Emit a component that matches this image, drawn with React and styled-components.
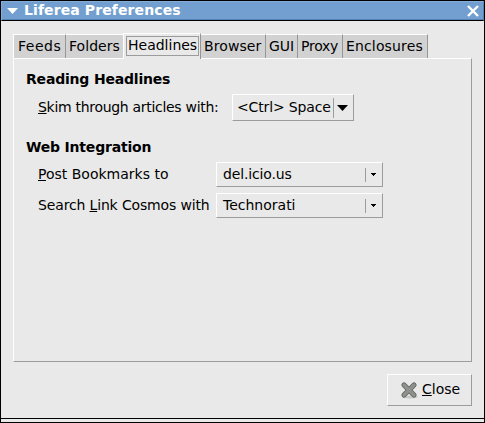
import React from 'react';
import styled, { createGlobalStyle } from 'styled-components';

const GlobalStyle = createGlobalStyle`
  * { box-sizing: border-box; }
  body { margin: 0; background: #e9e9e9; }
`;

const Window = styled.div`
  width: 485px;
  height: 423px;
  display: flex;
  flex-direction: column;
  border: 1px solid #000;
  background: #e9e9e9;
  color: #000;
  font: 14px/18px 'DejaVu Sans', sans-serif;
  white-space: nowrap;
  overflow: hidden;
  cursor: default;
`;

const TitleBar = styled.header`
  height: 20px;
  flex: none;
  display: flex;
  align-items: center;
  padding: 0 4px 0 5px;
  background: #729fcf;
  border-top: 1px solid #85add8;
  border-left: 1px solid #85add8;
  border-right: 1px solid #5582b3;
  border-bottom: 1px solid #000;
  box-shadow: inset 0 -1px #5582b3;
  color: #fff;
`;

const Title = styled.h1`
  flex: 1;
  margin: 0 0 0 6px;
  padding-bottom: 2px;
  font-size: 14px;
  line-height: 18px;
  font-weight: bold;
  letter-spacing: 0.1px;
`;

const Content = styled.main`
  height: 397px;
  flex: none;
  padding: 12px 12px 0;
  display: flex;
  flex-direction: column;
`;

const TabStrip = styled.nav`
  display: flex;
  align-items: flex-end;
  height: 25px;
  position: relative;
  z-index: 1;
`;

const Tab = styled.div`
  width: ${(p) => p.$width}px;
  height: ${(p) => (p.$active ? 26 : 24)}px;
  margin-bottom: ${(p) => (p.$active ? -1 : 0)}px;
  padding: 2px 0 0 ${(p) => p.$pad ?? 3}px;
  background: ${(p) => (p.$active ? '#e9e9e9' : '#d2d2d2')};
  border-top: 1px solid #fff;
  border-left: ${(p) => (p.$edge ? '1px solid #fff' : '0')};
  border-right: ${(p) => (p.$last ? '0' : '1px solid #969696')};
  letter-spacing: ${(p) => p.$spacing || 0}px;
`;

const FocusFrame = styled.span`
  display: block;
  width: 73px;
  height: 20px;
  padding-left: 1px;
  border: 1px solid #9c9c9c;
  line-height: 17px;
`;

const Panel = styled.section`
  height: 304px;
  padding: 11px 0 0 12px;
  border: 1px solid #fff;
  border-right-color: #9c9c9c;
  border-bottom-color: #9c9c9c;
`;

const Heading = styled.h2`
  margin: ${(p) => p.$top || 0}px 0 0;
  font-size: 14px;
  line-height: 18px;
  font-weight: bold;
  letter-spacing: -0.19px;
`;

const Field = styled.div`
  display: flex;
  align-items: center;
  height: ${(p) => p.$height}px;
  margin: ${(p) => p.$top}px 0 0 12px;
`;

const Label = styled.label`
  width: ${(p) => p.$width}px;
  flex: none;
  padding-bottom: 1px;
  letter-spacing: ${(p) => p.$spacing || 0}px;
`;

const Mnemonic = styled.span`
  text-decoration: underline;
  text-decoration-thickness: 1px;
  text-underline-offset: 1px;
  text-decoration-skip-ink: none;
`;

const Raised = styled.button`
  display: flex;
  align-items: center;
  width: ${(p) => p.$width}px;
  height: ${(p) => p.$height}px;
  padding: 0;
  border: 1px solid #fff;
  border-right-color: #9c9c9c;
  border-bottom-color: #9c9c9c;
  border-radius: 0;
  background: #e9e9e9;
  color: #000;
  font: inherit;
`;

const Value = styled.span`
  width: ${(p) => p.$width}px;
  padding: 0 0 1px ${(p) => p.$pad}px;
  text-align: left;
  letter-spacing: ${(p) => p.$spacing || 0}px;
`;

const Divider = styled.i`
  width: 1px;
  height: ${(p) => p.$height}px;
  background: #9c9c9c;
`;

const Arrow = styled.svg`
  display: block;
  flex: none;
  margin-left: ${(p) => p.$left || 0}px;
`;

const Actions = styled.footer`
  display: flex;
  justify-content: flex-end;
  margin-top: 12px;
`;

const CloseLabel = styled.span`
  margin-left: 4px;
  padding-bottom: 2px;
`;

const ResizeBar = styled.div`
  height: 4px;
  flex: none;
  border-top: 1px solid #000;
`;

const TABS = [
  { name: 'Feeds', width: 53, edge: true, spacing: 0.5, pad: 4 },
  { name: 'Folders', width: 57, last: true, spacing: 0.05 },
  { name: 'Headlines', width: 78, active: true, edge: true, pad: 2 },
  { name: 'Browser', width: 65, spacing: 0.1 },
  { name: 'GUI', width: 32 },
  { name: 'Proxy', width: 45, spacing: -0.25 },
  { name: 'Enclosures', width: 85, spacing: 0.15 },
];

function SmallArrow() {
  return (
    <Arrow $left={5} width="5" height="3" shapeRendering="crispEdges">
      <path d="M0 0h5v1h-1v1h-1v1h-1v-1h-1v-1h-1z" />
    </Arrow>
  );
}

export default function App() {
  return (
    <>
      <GlobalStyle />
      <Window>
        <TitleBar>
          <svg width="11" height="6" fill="#fff"><path d="M0 0h11L5.5 6z" /></svg>
          <Title>Liferea Preferences</Title>
          <svg width="12" height="12" stroke="#fff" strokeWidth="2.4"><path d="M1 1l10 10M11 1L1 11" /></svg>
        </TitleBar>
        <Content>
          <TabStrip>
            {TABS.map((t) => (
              <Tab key={t.name} $width={t.width} $active={t.active} $edge={t.edge} $last={t.last} $spacing={t.spacing} $pad={t.pad}>
                {t.active ? <FocusFrame>{t.name}</FocusFrame> : t.name}
              </Tab>
            ))}
          </TabStrip>
          <Panel>
            <Heading>Reading Headlines</Heading>
            <Field $height={27} $top={6}>
              <Label $width={194} $spacing={-0.3}><Mnemonic>S</Mnemonic>kim through articles with:</Label>
              <Raised $width={122} $height={27}>
                <Value $width={100} $pad={4} $spacing={-0.15}>&lt;Ctrl&gt; Space</Value>
                <Divider $height={20} />
                <Arrow $left={3} width="11" height="6"><path d="M0 0h11L5.5 6z" /></Arrow>
              </Raised>
            </Field>
            <Heading $top={17}>Web Integration</Heading>
            <Field $height={25} $top={6}>
              <Label $width={178}><Mnemonic>P</Mnemonic>ost Bookmarks to</Label>
              <Raised $width={167} $height={25}>
                <Value $width={148} $pad={6} $spacing={-0.15}>del.icio.us</Value>
                <Divider $height={14} />
                <SmallArrow />
              </Raised>
            </Field>
            <Field $height={25} $top={6}>
              <Label $width={178} $spacing={-0.15}>Search <Mnemonic>L</Mnemonic>ink Cosmos with</Label>
              <Raised $width={167} $height={25}>
                <Value $width={148} $pad={6}>Technorati</Value>
                <Divider $height={14} />
                <SmallArrow />
              </Raised>
            </Field>
          </Panel>
          <Actions>
            <Raised $width={85} $height={32}>
              <Arrow $left={12} width="18" height="18" fill="none" strokeLinecap="round">
                <ellipse cx="10" cy="16" rx="8" ry="1.5" fill="#c9c9c9" />
                <path d="M4 4l10 10M14 4L4 14" stroke="#62645f" strokeWidth="5.2" />
                <path d="M4 4l10 10M14 4L4 14" stroke="#8f918c" strokeWidth="3.4" />
              </Arrow>
              <CloseLabel><Mnemonic>C</Mnemonic>lose</CloseLabel>
            </Raised>
          </Actions>
        </Content>
        <ResizeBar />
      </Window>
    </>
  );
}
